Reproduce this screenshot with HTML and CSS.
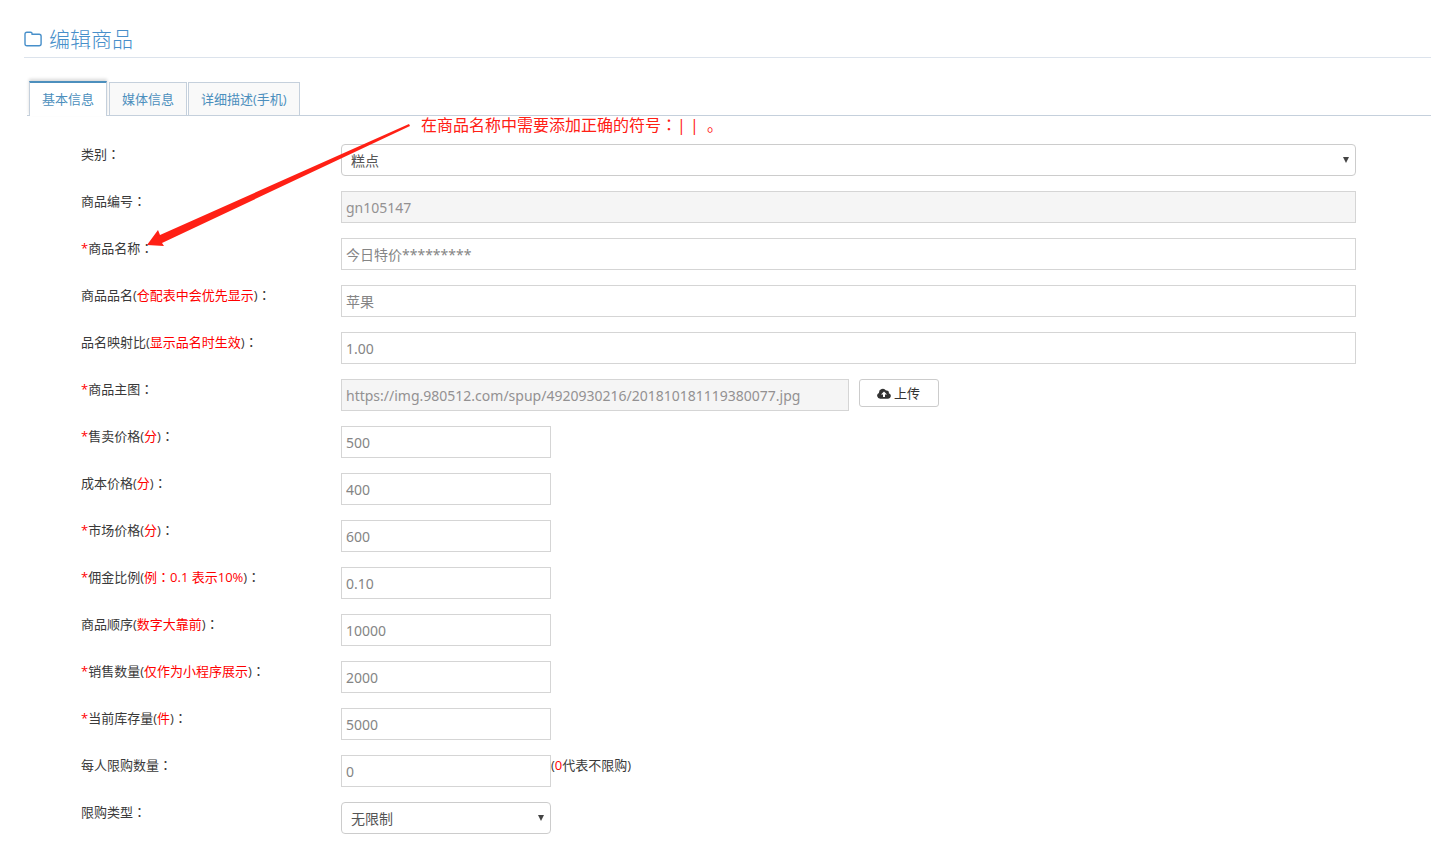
FILE: index.html
```html
<!DOCTYPE html>
<html lang="zh-CN">
<head>
<meta charset="utf-8">
<title>编辑商品</title>
<link rel="stylesheet" href="styles.css">
</head>
<body>
<main class="page">
  <h1 class="page-title">
    <svg class="folder" viewBox="0 0 18 16" aria-hidden="true"><path d="M3 1.2h3.6q1.5 0 1.5 1.5v.6h7q2 0 2 2v7.4q0 2-2 2H3q-2 0-2-2V3.2q0-2 2-2z"/></svg>
    编辑商品
  </h1>
  <nav class="tabs">
    <a class="tab active" href="#basic">基本信息</a>
    <a class="tab" href="#media">媒体信息</a>
    <a class="tab" href="#detail">详细描述(手机)</a>
  </nav>
  <form class="form" id="basic">
    <div class="row">
      <label for="category">类别<span class="colon" lang="zh-TW">：</span></label>
      <div class="field"><span class="select"><select id="category"><option>糕点</option></select></span></div>
    </div>
    <div class="row">
      <label for="code">商品编号<span class="colon" lang="zh-TW">：</span></label>
      <div class="field"><input id="code" type="text" value="gn105147" readonly></div>
    </div>
    <div class="row">
      <label for="name"><em>*</em>商品名称<span class="colon" lang="zh-TW">：</span></label>
      <div class="field"><input id="name" type="text" value="今日特价*********"></div>
    </div>
    <div class="row">
      <label for="alias">商品品名(<em>仓配表中会优先显示</em>)<span class="colon" lang="zh-TW">：</span></label>
      <div class="field"><input id="alias" type="text" value="苹果"></div>
    </div>
    <div class="row">
      <label for="ratio">品名映射比(<em>显示品名时生效</em>)<span class="colon" lang="zh-TW">：</span></label>
      <div class="field"><input id="ratio" type="text" value="1.00"></div>
    </div>
    <div class="row">
      <label for="image"><em>*</em>商品主图<span class="colon" lang="zh-TW">：</span></label>
      <div class="field upload">
        <input id="image" class="half" type="text" value="https://img.980512.com/spup/4920930216/201810181119380077.jpg" readonly>
        <button class="btn" type="button">
          <svg class="cloud" viewBox="0 0 14 11" aria-hidden="true"><path fill-rule="evenodd" d="M3.2 10.8A3.1 3.1 0 0 1 1.9 4.9 3.9 3.9 0 0 1 9 2.6a2.2 2.2 0 0 1 2.8 2.7 2.8 2.8 0 0 1-.7 5.5zM7 3.4 4 6.4h2v2.6h2V6.4h2z"/></svg>
          上传
        </button>
      </div>
    </div>
    <div class="row">
      <label for="price"><em>*</em>售卖价格(<em>分</em>)<span class="colon" lang="zh-TW">：</span></label>
      <div class="field"><input id="price" class="short" type="text" value="500"></div>
    </div>
    <div class="row">
      <label for="cost">成本价格(<em>分</em>)<span class="colon" lang="zh-TW">：</span></label>
      <div class="field"><input id="cost" class="short" type="text" value="400"></div>
    </div>
    <div class="row">
      <label for="market"><em>*</em>市场价格(<em>分</em>)<span class="colon" lang="zh-TW">：</span></label>
      <div class="field"><input id="market" class="short" type="text" value="600"></div>
    </div>
    <div class="row">
      <label for="commission"><em>*</em>佣金比例(<em>例<span class="colon" lang="zh-TW">：</span>0.1 表示10%</em>)<span class="colon" lang="zh-TW">：</span></label>
      <div class="field"><input id="commission" class="short" type="text" value="0.10"></div>
    </div>
    <div class="row">
      <label for="order">商品顺序(<em>数字大靠前</em>)<span class="colon" lang="zh-TW">：</span></label>
      <div class="field"><input id="order" class="short" type="text" value="10000"></div>
    </div>
    <div class="row">
      <label for="sold"><em>*</em>销售数量(<em>仅作为小程序展示</em>)<span class="colon" lang="zh-TW">：</span></label>
      <div class="field"><input id="sold" class="short" type="text" value="2000"></div>
    </div>
    <div class="row">
      <label for="stock"><em>*</em>当前库存量(<em>件</em>)<span class="colon" lang="zh-TW">：</span></label>
      <div class="field"><input id="stock" class="short" type="text" value="5000"></div>
    </div>
    <div class="row">
      <label for="limit">每人限购数量<span class="colon" lang="zh-TW">：</span></label>
      <div class="field"><input id="limit" class="short" type="text" value="0"><span class="hint">(<em>0</em>代表不限购)</span></div>
    </div>
    <div class="row">
      <label for="limit-type">限购类型<span class="colon" lang="zh-TW">：</span></label>
      <div class="field"><span class="select short"><select id="limit-type"><option>无限制</option></select></span></div>
    </div>
  </form>
  <svg class="arrow" viewBox="0 0 264 124" aria-hidden="true"><path d="M0 122 11 107 13 112 262 1 263 3 15 120 17 123z"/></svg>
  <p class="note">在商品名称中需要添加正确的符号<span class="colon" lang="zh-TW">：</span>| |&nbsp; 。</p>
</main>
</body>
</html>
```

FILE: styles.css
```css
* {
  box-sizing: border-box;
}

body {
  margin: 0;
  background: #fff;
  color: #393939;
  font: 13px/18px "Open Sans", "Noto Sans CJK SC", sans-serif;
}

.page {
  position: relative;
  padding: 22px 0 0 24px;
}

.page-title {
  display: flex;
  align-items: center;
  gap: 7px;
  margin: 0;
  height: 36px;
  padding-bottom: 2px;
  border-bottom: 1px solid #dce3ec;
  color: #478fca;
  font-size: 21px;
  font-weight: 300;
  line-height: 32px;
}

.folder {
  width: 18px;
  height: 16px;
  fill: none;
  stroke: #478fca;
  stroke-width: 1.4;
}

.tabs {
  display: flex;
  align-items: flex-end;
  gap: 1px;
  margin-left: 3px;
  padding: 23px 0 0 2px;
  border-bottom: 1px solid #c5d0dc;
}

.tab {
  padding: 7px 12px;
  height: 33px;
  border: 1px solid #c5d0dc;
  border-bottom: 0;
  background: #f9f9f9;
  color: #4c8fbd;
  text-decoration: none;
}

.tab.active {
  margin: 0 1px -1px 0;
  height: 35px;
  border-top: 2px solid #4c8fbd;
  background: #fff;
  box-shadow: 0 -2px 3px rgba(0, 0, 0, 0.15);
}

.form {
  display: grid;
  gap: 15px;
  padding: 28px 75px 0 57px;
}

.row {
  display: grid;
  grid-template-columns: 260px 1fr;
  align-items: start;
}

.row label,
.hint {
  padding-top: 1px;
}

.field {
  display: flex;
  align-items: flex-start;
}

em {
  color: #f00;
  font-style: normal;
}

.colon {
  font-family: "Noto Sans CJK TC", sans-serif;
}

input {
  width: 100%;
  height: 32px;
  padding: 5px 4px;
  border: 1px solid #d5d5d5;
  border-radius: 0;
  background: #fff;
  color: #858585;
  font: 14px/20px "Noto Sans", "Noto Sans CJK SC", sans-serif;
}

input[readonly] {
  background: #f5f5f5;
  color: #939192;
}

.half {
  width: 50%;
}

.short {
  width: 210px;
}

.select {
  display: block;
  position: relative;
  flex: 0 0 auto;
}

.select:not(.short) {
  width: 100%;
}

.select::after {
  content: "";
  position: absolute;
  top: 13px;
  right: 7px;
  border: 3px solid transparent;
  border-top: 6px solid #444;
  border-bottom: 0;
  pointer-events: none;
}

select {
  appearance: none;
  width: 100%;
  height: 32px;
  padding: 6px 9px 4px;
  border: 1px solid #ccc;
  border-radius: 4px;
  background: #fff;
  color: #555;
  font: 14px/20px "Open Sans", "Noto Sans CJK SC", sans-serif;
}

.upload {
  gap: 10px;
}

.btn {
  display: flex;
  align-items: center;
  justify-content: center;
  gap: 3px;
  width: 80px;
  height: 28px;
  padding: 0;
  border: 1px solid #ccc;
  border-radius: 3px;
  background: #fff;
  color: #333;
  font: 13px/18px "Open Sans", "Noto Sans CJK SC", sans-serif;
}

.cloud {
  width: 14px;
  height: 11px;
  fill: #333;
}

.arrow {
  position: absolute;
  top: 123px;
  left: 147px;
  width: 264px;
  height: 124px;
  fill: #ff2015;
  pointer-events: none;
}

.note {
  position: absolute;
  top: 113px;
  left: 421px;
  margin: 0;
  color: #ff2015;
  font-size: 16px;
  line-height: 22px;
}
```
